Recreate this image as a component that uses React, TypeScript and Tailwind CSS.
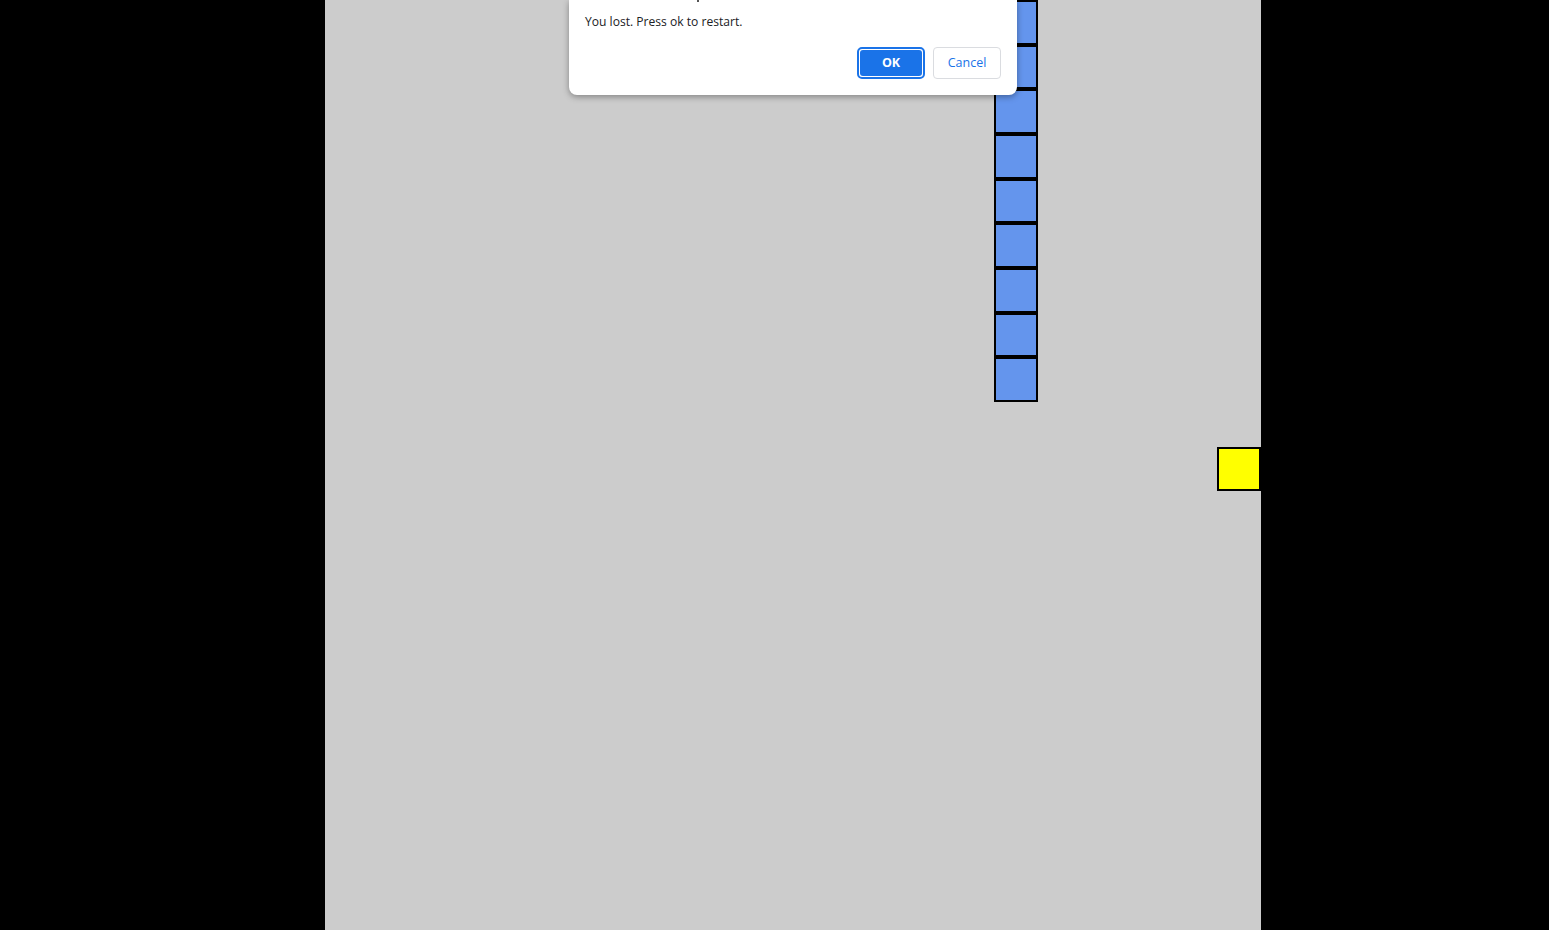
import React from "react";

const CW = 44.6;
const CH = 44.67;
const snake = [0, 1, 2, 3, 4, 5, 6, 7, 8].map((r) => ({ c: 15, r }));
const food = { c: 20, r: 10 };

function Cell({ c, r, color }: { c: number; r: number; color: string }) {
  const left = Math.round(c * CW);
  const top = Math.round(r * CH);
  const w = 44;
  const h = Math.round((r + 1) * CH) - top;
  return (
    <div
      className="absolute box-border border-2 border-black"
      style={{ left, top, width: w, height: h, background: color }}
    />
  );
}

export default function App() {
  return (
    <div
      className="relative w-[1549px] h-[930px] overflow-hidden bg-black flex"
      style={{ fontFamily: '"Open Sans", "Noto Sans", Arial, sans-serif' }}
    >
      <div className="ml-[325px] w-[936px] h-[930px] bg-[#cccccc] relative overflow-hidden">
        {snake.map((s, i) => (
          <Cell key={i} c={s.c} r={s.r} color="#6495ed" />
        ))}
        <Cell c={food.c} r={food.r} color="#ffff00" />
      </div>

      {/* alert dialog */}
      <div className="absolute left-[569px] top-0 w-[448px] h-[95px] bg-white rounded-b-[8px] shadow-[0_2px_6px_rgba(0,0,0,0.35)] flex flex-col px-4 pt-[14px] pb-4">
        <div className="absolute left-[128px] top-0 w-[2px] h-[2px] bg-[#555]" />
        <div className="text-[12.1px] leading-[16px] text-[#202124] whitespace-nowrap">
          You lost. Press ok to restart.
        </div>
        <div className="mt-auto flex justify-end gap-2">
          <button className="w-[68px] h-[32px] rounded-[5px] border-2 border-[#1a73e8] p-[1px] bg-white">
            <span className="flex w-full h-full items-center justify-center rounded-[3px] bg-[#1a73e8] text-white text-[12.5px] font-bold">
              OK
            </span>
          </button>
          <button className="w-[68px] h-[32px] rounded-[4px] border border-[#dadce0] bg-white text-[#1a73e8] text-[12.5px] flex items-center justify-center">
            Cancel
          </button>
        </div>
      </div>
    </div>
  );
}
